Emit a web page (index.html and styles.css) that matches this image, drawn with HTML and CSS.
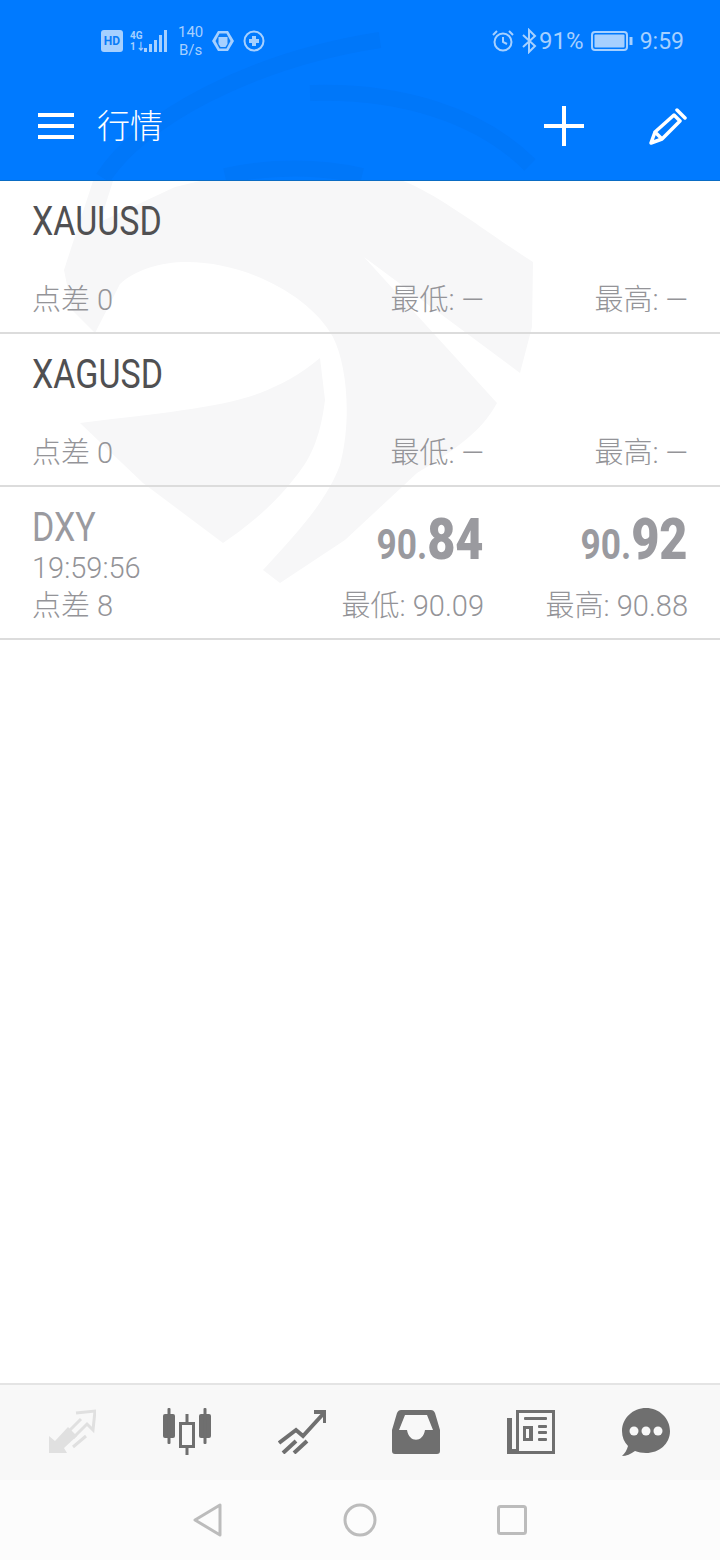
FILE: index.html
```html
<!DOCTYPE html>
<html>
<head>
  <meta name="viewport" content="width=device-width, initial-scale=1.0">
  <title>行情</title>
  <link rel="stylesheet" href="styles.css">
</head>
<body>
  <div class="top">
    <svg class="top-mark" width="720" height="180" viewBox="0 0 720 180">
      <path d="M103 178C140 120 250 60 380 40" />
      <path d="M310 93C400 90 480 115 530 165" />
      <path d="M225 176C270 166 320 166 362 176" />
    </svg>
    <div class="status">
      <div class="status-left">
        <span class="hd">HD</span>
        <div class="net">
          <span>4G</span>
          <span>1↓</span>
        </div>
        <svg class="bars" width="24" height="24" viewBox="0 0 24 24">
          <rect x="1" y="19" width="3" height="4" />
          <rect x="6" y="15" width="3" height="8" />
          <rect x="11" y="11" width="3" height="12" />
          <rect x="16" y="6" width="3" height="17" />
          <rect x="21" y="1" width="3" height="22" />
        </svg>
        <div class="speed">
          <span>140</span>
          <span>B/s</span>
        </div>
        <svg class="round-icon" width="22" height="22" viewBox="0 0 22 22">
          <path class="fill-soft" d="M6 1H16L22 11L16 21H6L0 11Z" />
          <path class="fill-blue" d="M7.500 3.500H14.500L18.500 11L14.500 18.500H7.500L3.500 11Z" />
          <path class="fill-soft" d="M6.500 7h9v7l-2 3h-5l-2-3Z" />
        </svg>
        <svg class="round-icon" width="22" height="22" viewBox="0 0 22 22">
          <circle class="line-soft" cx="11" cy="11" r="9.500" />
          <path class="line-soft-thick" d="M11 6V16M6 11H16" />
        </svg>
      </div>
      <div class="status-right">
        <svg width="24" height="24" viewBox="0 0 24 24">
          <circle class="line-soft" cx="12" cy="13" r="8.500" />
          <path class="line-soft" d="M12 8V13L16 15M2 6L6 2M22 6L18 2" />
        </svg>
        <svg class="bt" width="16" height="26" viewBox="0 0 16 26">
          <path class="line-soft" d="M2 7L14 18L8 24V2L14 8L2 19" />
        </svg>
        <span class="pct">91%</span>
        <svg class="battery" width="42" height="20" viewBox="0 0 42 20">
          <rect class="line-soft" x="1" y="1" width="35" height="18" rx="3" />
          <rect class="fill-soft" x="3.500" y="3.500" width="30" height="13" rx="1" />
          <rect class="fill-soft" x="38.500" y="6" width="3" height="8" />
        </svg>
        <span class="clock">9:59</span>
      </div>
    </div>
    <div class="toolbar">
      <div class="menu">
        <span></span>
        <span></span>
        <span></span>
      </div>
      <h1 class="title">行情</h1>
      <svg class="plus" width="40" height="40" viewBox="0 0 40 40">
        <path d="M20 0V40M0 20H40" />
      </svg>
      <svg class="pencil" width="38" height="38" viewBox="0 0 38 38">
        <path d="M25 8L31 14L13 32L2 36L6 25ZM6 25L13 32M28 3L36 11" />
      </svg>
    </div>
  </div>

  <div class="list">
    <svg class="mark" width="720" height="420" viewBox="0 181 720 420">
      <path d="M93 181H113L100 222L175 187L200 181H403C440 195 490 235 533 262L532 327L520 373L364 257L497 403C485 425 467 443 417 473L345 540L280 583L263 570C300 530 327 500 340 465C352 420 347 365 333 337C310 295 245 262 187 262C160 262 135 270 120 284L95 333L72 310L64 270Z" />
      <path d="M320 358C300 375 280 385 260 393C220 408 160 413 80 423L143 483L223 543C250 525 275 503 293 480C310 460 320 440 325 400Z" />
    </svg>

    <div class="row">
      <div class="info">
        <div class="name">XAUUSD</div>
        <div class="spread">点差 0</div>
      </div>
      <div class="quote"><div class="range">最低: —</div></div>
      <div class="quote"><div class="range">最高: —</div></div>
    </div>

    <div class="row">
      <div class="info">
        <div class="name">XAGUSD</div>
        <div class="spread">点差 0</div>
      </div>
      <div class="quote"><div class="range">最低: —</div></div>
      <div class="quote"><div class="range">最高: —</div></div>
    </div>

    <div class="row row-live">
      <div class="info">
        <div class="name">DXY</div>
        <div>
          <div class="time">19:59:56</div>
          <div class="spread">点差 8</div>
        </div>
      </div>
      <div class="quote">
        <div class="price">90.<b>84</b></div>
        <div class="range">最低: 90.09</div>
      </div>
      <div class="quote">
        <div class="price">90.<b>92</b></div>
        <div class="range">最高: 90.88</div>
      </div>
    </div>
  </div>

  <div class="tabs">
    <svg class="tab-off" width="48" height="46" viewBox="0 0 48 46">
      <path class="fill" d="M1 44V27L7 32L20 18L29 27L16 39L19 44Z" />
      <path class="line" d="M28 4L47 2L45 21L39 15L25 29M33 10L21 22M25 38L38 27" />
    </svg>
    <svg width="48" height="48" viewBox="0 0 48 48">
      <rect class="fill" x="0" y="6" width="12" height="24" rx="2" />
      <rect class="fill" x="4.500" y="0" width="3" height="36" rx="1" />
      <rect class="fill" x="36" y="6" width="12" height="24" rx="2" />
      <rect class="fill" x="40.500" y="0" width="3" height="36" rx="1" />
      <rect class="line" x="17.500" y="15.500" width="13" height="23" />
      <path class="line" d="M24 6V15M24 39V47" />
    </svg>
    <svg width="48" height="44" viewBox="0 0 48 44">
      <path class="line-bold" d="M1 33L18 20L25 26L46 3M36 2H47V13M5 43L18 31M16 43L29 31" />
    </svg>
    <svg width="48" height="44" viewBox="0 0 48 44">
      <path class="fill" fill-rule="evenodd" d="M9 0H39C41 0 42 1 43 3L48 20V41A3 3 0 0 1 45 44H3A3 3 0 0 1 0 41V20L5 3C6 1 7 0 9 0ZM13 5L7 20H15C17 33 31 33 33 20H41L35 5Z" />
    </svg>
    <svg width="48" height="44" viewBox="0 0 48 44">
      <path class="fill" d="M0 8H5V39H9V0H48V44H0ZM12 3V41H45V3Z" fill-rule="evenodd" />
      <rect class="fill" x="17" y="7" width="23" height="3" rx="1" />
      <rect class="fill" x="16" y="16" width="10" height="15" />
      <rect class="hole" x="19" y="19" width="3" height="9" />
      <rect class="fill" x="31" y="15" width="9" height="3" rx="1" />
      <rect class="fill" x="31" y="21" width="9" height="3" rx="1" />
      <rect class="fill" x="31" y="28" width="9" height="3" rx="1" />
    </svg>
    <svg width="48" height="48" viewBox="0 0 48 48">
      <path class="fill" d="M24 0C37 0 48 10 48 23C48 36 37 45 24 45C20 45 16 44 13 43C9 46 4 48 0 48C3 45 5 42 6 38C2 34 0 29 0 23C0 10 11 0 24 0Z" />
      <circle class="hole" cx="12" cy="23" r="4.500" />
      <circle class="hole" cx="24" cy="23" r="4.500" />
      <circle class="hole" cx="36" cy="23" r="4.500" />
    </svg>
  </div>

  <div class="nav">
    <svg width="30" height="34" viewBox="0 0 30 34">
      <path d="M2 17L27 2V32Z" />
    </svg>
    <svg width="34" height="34" viewBox="0 0 34 34">
      <circle cx="17" cy="17" r="15" />
    </svg>
    <svg width="30" height="30" viewBox="0 0 30 30">
      <rect x="1.500" y="1.500" width="27" height="27" rx="2" />
    </svg>
  </div>
</body>
</html>
```

FILE: styles.css
```css
body {
  font-family: Roboto, "Noto Sans CJK SC", sans-serif;
  background-color: #fff;
  margin: 0;
  height: 1560px;
  display: flex;
  flex-direction: column;
  overflow: hidden;
}

.top {
  position: relative;
  height: 180px;
  background-color: #007aff;
  border-bottom: 1px solid #0a6cc4;
  flex-shrink: 0;
}

.top-mark {
  position: absolute;
  left: 0;
  top: 0;
}

.top-mark path {
  fill: none;
  stroke: #0077f9;
  stroke-width: 16;
}

/* status bar */
.status {
  position: relative;
  height: 82px;
  display: flex;
  justify-content: space-between;
  align-items: center;
  padding: 0 36px 0 101px;
  color: #a6d0ff;
}

.status-left, .status-right {
  display: flex;
  align-items: center;
}

.hd {
  width: 22px;
  height: 22px;
  border-radius: 3px;
  background-color: #a6d0ff;
  color: #0a7cf8;
  font-size: 12px;
  font-weight: 700;
  line-height: 22px;
  text-align: center;
}

.net {
  display: flex;
  flex-direction: column;
  width: 14px;
  margin-left: 7px;
  font-size: 10px;
  font-weight: 700;
  line-height: 11px;
}

.bars {
  margin-left: -1px;
}

.bars rect, .fill-soft {
  fill: #a6d0ff;
}

.fill-blue {
  fill: #0a7cf8;
}

.line-soft {
  fill: none;
  stroke: #a6d0ff;
  stroke-width: 2;
}

.line-soft-thick {
  fill: none;
  stroke: #a6d0ff;
  stroke-width: 4;
}

.speed {
  display: flex;
  flex-direction: column;
  align-items: center;
  margin-left: 11px;
  font-size: 15px;
  line-height: 18px;
}

.round-icon {
  margin-left: 9px;
}

.bt {
  margin: 0 2px 0 6px;
}

.pct {
  font-size: 24px;
}

.battery {
  margin-left: 7px;
}

.clock {
  font-size: 23px;
  margin-left: 7px;
}

/* toolbar */
.toolbar {
  position: relative;
  display: flex;
  align-items: center;
  height: 88px;
  padding-left: 38px;
}

.menu {
  display: flex;
  flex-direction: column;
  gap: 7px;
  width: 36px;
}

.menu span {
  height: 4px;
  background-color: #fff;
}

.title {
  margin: 0 0 4px 23px;
  color: #fff;
  font-size: 33px;
  font-weight: 300;
  flex: 1;
}

.plus path {
  fill: none;
  stroke: #fff;
  stroke-width: 4;
  stroke-linecap: round;
}

.pencil {
  margin: 0 33px 0 65px;
}

.pencil path {
  fill: none;
  stroke: #fff;
  stroke-width: 3.500;
  stroke-linecap: round;
  stroke-linejoin: round;
}

/* quote list */
.list {
  position: relative;
  isolation: isolate;
  flex: 1;
}

.mark {
  position: absolute;
  left: 0;
  top: 0;
  z-index: -1;
}

.mark path {
  fill: #f7f7f8;
}

.row {
  display: flex;
  box-sizing: border-box;
  height: 153px;
  padding: 21px 32px 14px 32px;
  border-bottom: 2px solid #dcdcdc;
}

.info {
  flex: 1;
  display: flex;
  flex-direction: column;
  justify-content: space-between;
}

.name {
  font-size: 40px;
  line-height: 40px;
  color: #505052;
  transform: scaleX(.85);
  transform-origin: left;
}

.row-live .name {
  color: #9a9a9f;
}

.time, .spread, .range {
  font-size: 29px;
  font-weight: 300;
  line-height: 36px;
  color: #949498;
}

.time {
  margin-bottom: 2px;
}

.quote {
  width: 204px;
  display: flex;
  flex-direction: column;
  justify-content: flex-end;
  align-items: flex-end;
}

.price {
  font-size: 42px;
  font-weight: 700;
  line-height: 60px;
  margin-bottom: 13px;
  color: #9a9a9f;
  transform: scaleX(.84);
  transform-origin: right;
}

.price b {
  font-size: 58px;
}

/* bottom tabs */
.tabs {
  display: grid;
  grid-template-columns: repeat(6, 1fr);
  justify-items: center;
  align-items: center;
  box-sizing: border-box;
  height: 97px;
  padding: 0 17px 2px 15px;
  background-color: #f8f8f8;
  border-top: 2px solid #e4e4e4;
  flex-shrink: 0;
}

.tabs .fill {
  fill: #6f6f6f;
}

.tabs .line {
  fill: none;
  stroke: #6f6f6f;
  stroke-width: 3;
}

.tabs .line-bold {
  fill: none;
  stroke: #6f6f6f;
  stroke-width: 4;
}

.tabs .hole {
  fill: #f8f8f8;
}

.tabs .tab-off .fill {
  fill: #e0e0e0;
}

.tabs .tab-off .line {
  stroke: #e0e0e0;
}

/* android nav */
.nav {
  display: flex;
  justify-content: center;
  align-items: center;
  gap: 120px;
  height: 80px;
  background-color: #fcfcfc;
  flex-shrink: 0;
}

.nav svg * {
  fill: none;
  stroke: #bcbcbc;
  stroke-width: 3;
  stroke-linejoin: round;
}
```
